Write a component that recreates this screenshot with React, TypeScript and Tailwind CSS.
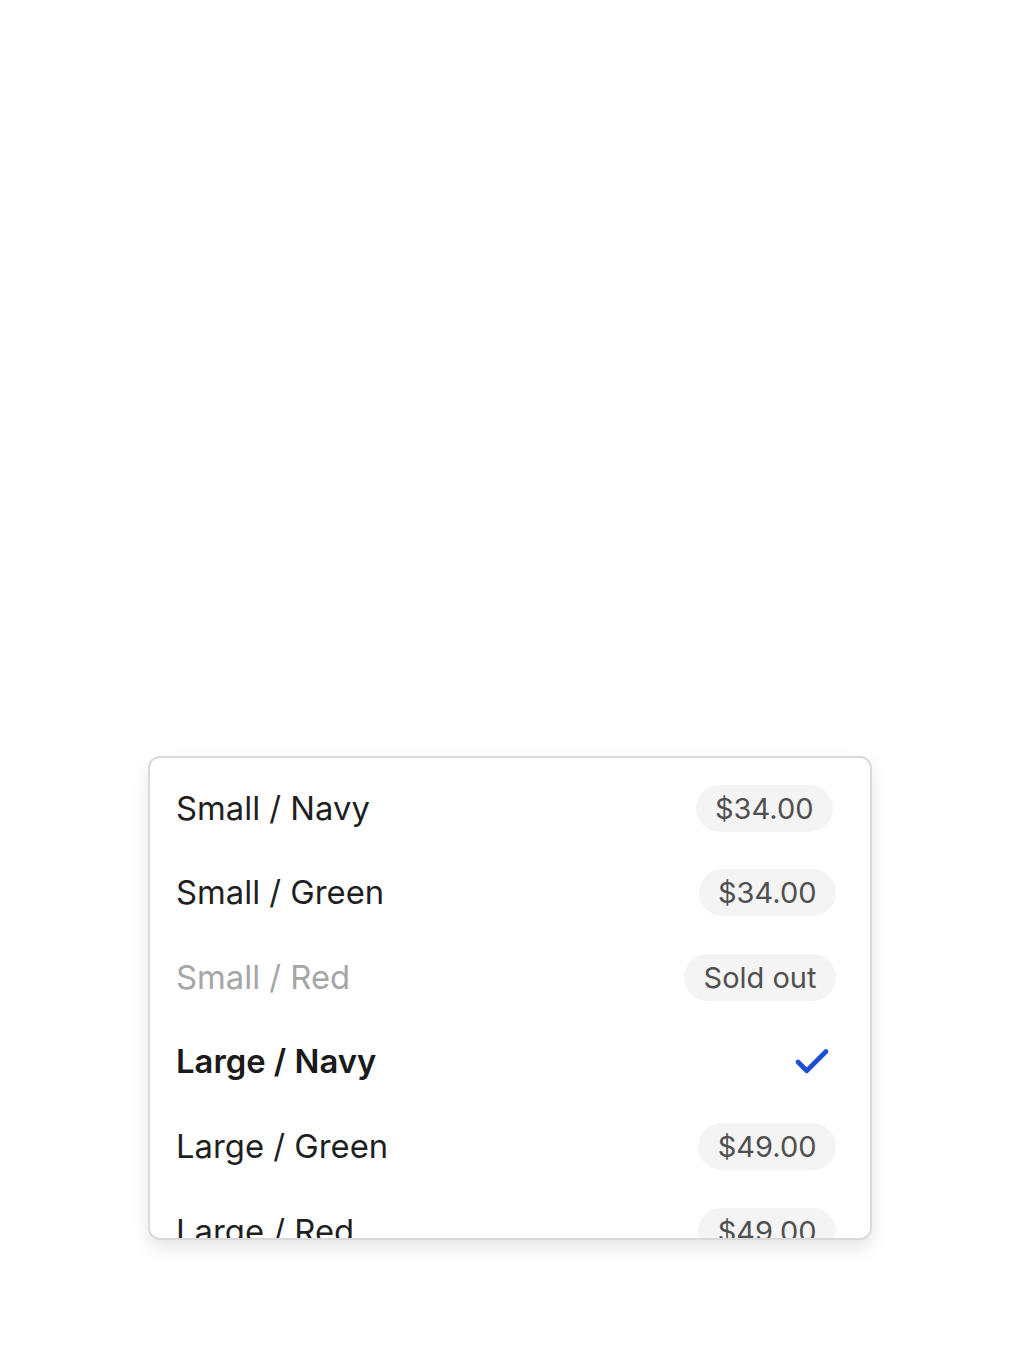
import { Check } from "lucide-react";

type Variant = {
  name: string;
  price?: string;
  soldOut?: boolean;
  selected?: boolean;
};

const variants: Variant[] = [
  { name: "Small / Navy", price: "$34.00" },
  { name: "Small / Green", price: "$34.00" },
  { name: "Small / Red", soldOut: true },
  { name: "Large / Navy", selected: true },
  { name: "Large / Green", price: "$49.00" },
  { name: "Large / Red", price: "$49.00" },
];

const Row = ({ v, first }: { v: Variant; first: boolean }) => {
  return (
    <div className="flex h-[84.6px] shrink-0 items-center justify-between pl-[26px] pr-[34px]">
      <span
        className={
          v.selected
            ? "text-[32.8px] font-semibold text-[#1a1a1a]"
            : v.soldOut
              ? "text-[32.8px] text-[#a6a6a6]"
              : "text-[32.8px] text-[#1f1f1f]"
        }
      >
        {v.name}
      </span>
      {v.selected ? (
        <Check className="mr-[3px] h-[42px] w-[42px] text-[#1d4ed8]" strokeWidth={2.7} />
      ) : (
        <span
          className={
            "flex h-[47px] items-center rounded-full bg-[#f4f4f4] px-[19.5px] text-[29px] text-[#505050]" +
            (first ? " mr-[3px]" : "")
          }
        >
          {v.soldOut ? "Sold out" : v.price}
        </span>
      )}
    </div>
  );
};

export default function App() {
  return (
    <div className="flex min-h-screen flex-col bg-white pt-[756px] font-['Inter',sans-serif]">
      <div className="mx-auto w-[724px]">
        <div className="flex h-[484px] flex-col overflow-hidden rounded-[12px] border-2 border-[#d9d9d9] bg-white pt-[8px] shadow-[0_8px_18px_rgba(0,0,0,0.10)]">
          {variants.map((v, i) => (
            <Row key={v.name} v={v} first={i === 0} />
          ))}
        </div>
      </div>
    </div>
  );
}
